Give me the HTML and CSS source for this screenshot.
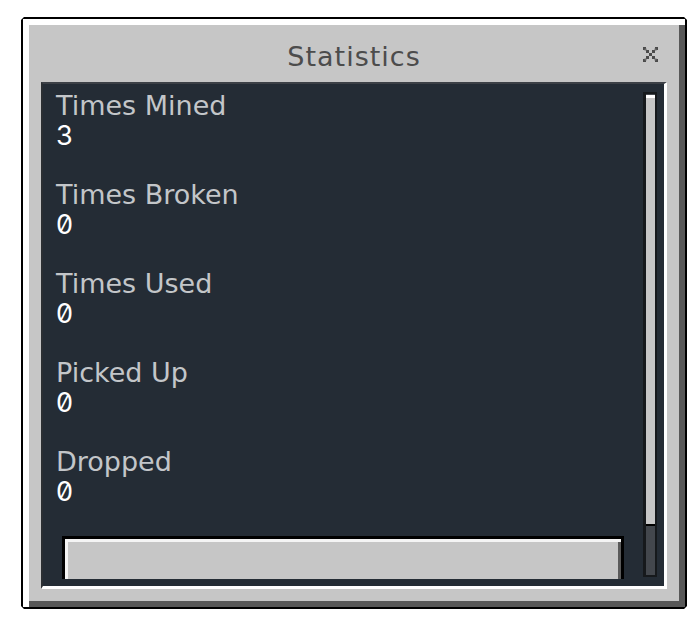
FILE: index.html
```html
<!DOCTYPE html>
<html lang="en">
<head>
<meta charset="utf-8">
<title>Statistics</title>
<link rel="stylesheet" href="styles.css">
</head>
<body>
<div class="dialog">
  <div class="titlebar">
    <span class="spacer"></span>
    <h1 class="title">Statistics</h1>
    <button class="close" aria-label="Close">
      <svg width="15" height="15" viewBox="0 0 15 15" aria-hidden="true">
        <g fill="#4a4a4a">
          <rect x="0" y="0" width="3" height="3"/>
          <rect x="12" y="0" width="3" height="3"/>
          <rect x="3" y="3" width="3" height="3"/>
          <rect x="9" y="3" width="3" height="3"/>
          <rect x="6" y="6" width="3" height="3"/>
          <rect x="3" y="9" width="3" height="3"/>
          <rect x="9" y="9" width="3" height="3"/>
          <rect x="0" y="12" width="3" height="3"/>
          <rect x="12" y="12" width="3" height="3"/>
        </g>
        <g fill="#6a6a6a">
          <rect x="1.5" y="1.5" width="2" height="2"/>
          <rect x="11.5" y="1.5" width="2" height="2"/>
          <rect x="1.5" y="11.5" width="2" height="2"/>
          <rect x="11.5" y="11.5" width="2" height="2"/>
        </g>
      </svg>
    </button>
  </div>
  <div class="panel">
    <div class="viewport">
      <div class="stat">
        <div class="label">Times Mined</div>
        <div class="value">3</div>
      </div>
      <div class="stat">
        <div class="label">Times Broken</div>
        <div class="value">0</div>
      </div>
      <div class="stat">
        <div class="label">Times Used</div>
        <div class="value">0</div>
      </div>
      <div class="stat">
        <div class="label">Picked Up</div>
        <div class="value">0</div>
      </div>
      <div class="stat">
        <div class="label">Dropped</div>
        <div class="value">0</div>
      </div>
      <button class="back">Back</button>
    </div>
    <div class="scrollbar">
      <div class="thumb"></div>
    </div>
  </div>
</div>
</body>
</html>
```
FILE: styles.css
```css
* {
  box-sizing: border-box;
}

html, body {
  margin: 0;
  padding: 0;
  background: #ffffff;
}

body {
  font-family: "DejaVu Sans", "Liberation Sans", sans-serif;
}

.dialog {
  margin: 17px 0 0 21px;
  width: 666px;
  height: 592px;
  border: 2px solid #000;
  background: #c6c6c6;
  box-shadow: inset 6px 6px 0 #ffffff, inset -6px -6px 0 #585858;
  padding: 0 18px 18px 18px;
  display: flex;
  flex-direction: column;
  clip-path: polygon(3px 0, calc(100% - 3px) 0, 100% 3px, 100% calc(100% - 3px), calc(100% - 3px) 100%, 3px 100%, 0 calc(100% - 3px), 0 3px);
}

.titlebar {
  height: 63px;
  padding-top: 23px;
  display: grid;
  grid-template-columns: 1fr auto 1fr;
  align-items: start;
}

.title {
  margin: 0;
  font-size: 27px;
  line-height: 30px;
  font-weight: normal;
  color: #4c4c4c;
  letter-spacing: 1px;
}

.close {
  justify-self: end;
  margin: 5px 9px 0 0;
  padding: 0;
  border: 0;
  background: none;
  width: 15px;
  height: 15px;
  display: block;
}

.close svg {
  display: block;
}

.panel {
  height: 507px;
  background: #242c35;
  border-top: 2px solid #3c4046;
  border-left: 2px solid #2b2f33;
  border-right: 3px solid #ffffff;
  border-bottom: 3px solid #ffffff;
  display: flex;
  align-items: flex-start;
}

.viewport {
  flex: 1;
  height: 495px;
  overflow: hidden;
  padding: 7px 0 0 13px;
}

.stat {
  margin-bottom: 29px;
}

.label {
  font-size: 27px;
  line-height: 30px;
  color: #c3c6c9;
  white-space: nowrap;
}

.value {
  font-family: Inter, "DejaVu Sans", sans-serif;
  font-size: 27px;
  line-height: 30px;
  color: #ffffff;
  font-variant-numeric: slashed-zero;
  font-feature-settings: "zero" 1;
}

.back {
  display: block;
  margin: 6px 0 0 6px;
  width: 562px;
  height: 84px;
  padding: 28px 0 0 0;
  border: 3px solid #000;
  background: #c6c6c6;
  box-shadow: inset 3px 3px 0 #f4f4f4, inset -3px -3px 0 #5a5a5a;
  font-family: "DejaVu Sans", "Liberation Sans", sans-serif;
  font-size: 27px;
  line-height: 30px;
  color: #4c4c4c;
  text-align: center;
}

.scrollbar {
  width: 14px;
  height: 485px;
  margin: 8px 7px 0 0;
  background: #43474d;
  border: 2px solid #16191c;
  border-left-width: 3px;
  display: flex;
  flex-direction: column;
}

.thumb {
  height: 431px;
  margin-top: 1px;
  background: #c6c6c6;
  border-bottom: 2px solid #000;
  box-shadow: inset 0 3px 0 #ffffff;
}
```
